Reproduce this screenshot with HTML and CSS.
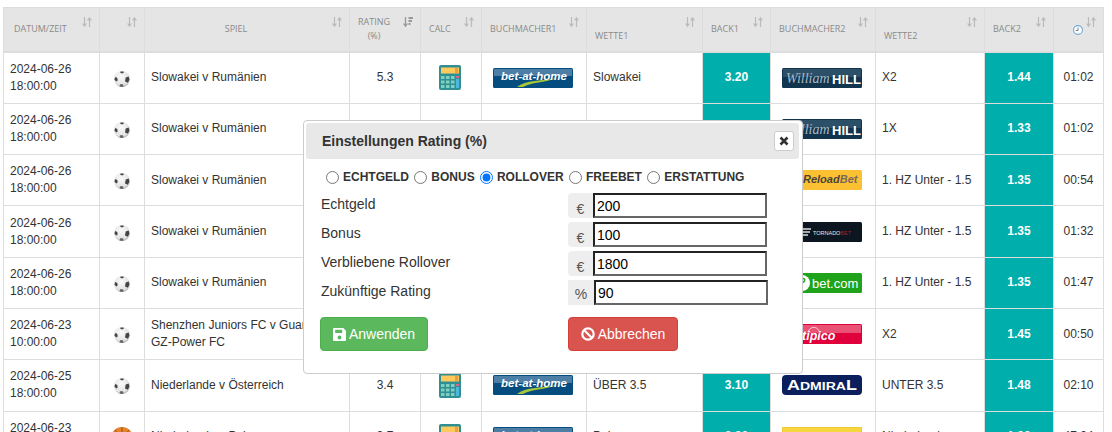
FILE: index.html
```html
<!DOCTYPE html>
<html lang="de">
<head>
    <meta charset="UTF-8">
    <title>Rating</title>
    <link rel="stylesheet" href="styles.css">
</head>
<body>
<svg class="defs" width="0" height="0">
    <defs>
        <radialGradient id="ball-shade" cx=".45" cy=".35" r=".75">
            <stop offset="0" stop-color="#fafafa"/>
            <stop offset=".7" stop-color="#e2e2e2"/>
            <stop offset="1" stop-color="#8c8c8c"/>
        </radialGradient>
    </defs>
    <symbol id="sort" viewBox="0 0 10 10">
        <path d="M2.500 0v8.500M.6 6.500l1.900 2.700 1.900-2.700M7.500 10V1.500M5.600 3.500l1.900-2.700 1.900 2.700" fill="none" stroke="currentColor" stroke-width="1.200"/>
    </symbol>
    <symbol id="sort-active" viewBox="0 0 10 10">
        <path d="M2.500 0v8.500M.6 6.500l1.900 2.700 1.900-2.700" fill="none" stroke="#999" stroke-width="1.300"/>
        <path d="M5.500 0h4.500v2H5.500zM5.500 3h3.500v2H5.500zM5.500 6h2v2H5.500z" fill="#999"/>
    </symbol>
    <symbol id="ball" viewBox="0 0 16 16">
        <circle cx="8" cy="8" r="8" fill="url(#ball-shade)"/>
        <path d="M6.500 .6l3 0 .4 1-1.900 1-1.900-1zM1.300 6l2 .9.4 2.600-1.500 1L.4 8.500zM14.700 5.500l-3 1.100-.7 3.900 2.900 1.200 1.600-3.200z" fill="#444"/>
        <path d="M6 13.200l3 .1.600 2.200-1.600.4-2.400-.4z" fill="#666"/>
    </symbol>
    <symbol id="calc" viewBox="0 0 22 25">
        <rect width="22" height="25" rx="2" fill="#2f8f93"/>
        <rect x="2" y="2.500" width="18" height="6" fill="#ffc95c"/>
        <rect x="16" y="3" width="3" height="5" fill="#ee9c3c"/>
        <g fill="#7fd0c2">
            <rect x="2" y="11" width="3.500" height="3"/><rect x="7" y="11" width="3.500" height="3"/><rect x="12" y="11" width="3.500" height="3"/>
            <rect x="2" y="15.500" width="3.500" height="3"/><rect x="7" y="15.500" width="3.500" height="3"/><rect x="12" y="15.500" width="3.500" height="3"/>
            <rect x="2" y="20" width="3.500" height="3"/><rect x="7" y="20" width="3.500" height="3"/><rect x="12" y="20" width="3.500" height="3"/>
        </g>
        <rect x="17" y="11" width="3" height="2" fill="#d8688c"/>
        <rect x="17" y="14" width="3" height="9" fill="#4fb6e0"/>
    </symbol>
    <symbol id="basket" viewBox="0 0 22 22">
        <circle cx="11" cy="11" r="11" fill="#e5822a"/>
        <path d="M0 11h22M11 0v22M4 3c4 4 4 12 0 16M18 3c-4 4-4 12 0 16" fill="none" stroke="#7a4413" stroke-width=".8"/>
    </symbol>
</svg>

<table class="odds">
    <colgroup>
        <col class="c-date"><col class="c-sport"><col class="c-game"><col class="c-rating"><col class="c-calc">
        <col class="c-book1"><col class="c-bet1"><col class="c-back1"><col class="c-book2"><col class="c-bet2">
        <col class="c-back2"><col class="c-time">
    </colgroup>
    <thead>
    <tr>
        <th class="left first">DATUM/ZEIT<svg class="sort"><use href="#sort"/></svg></th>
        <th><svg class="sort"><use href="#sort"/></svg></th>
        <th class="ctr">SPIEL<svg class="sort"><use href="#sort"/></svg></th>
        <th class="ctr">RATING<br>(%)<svg class="sort"><use href="#sort-active"/></svg></th>
        <th class="left">CALC<svg class="sort"><use href="#sort"/></svg></th>
        <th class="left">BUCHMACHER1<svg class="sort"><use href="#sort"/></svg></th>
        <th class="left low">WETTE1<svg class="sort"><use href="#sort"/></svg></th>
        <th class="left">BACK1<svg class="sort"><use href="#sort"/></svg></th>
        <th class="left">BUCHMACHER2<svg class="sort"><use href="#sort"/></svg></th>
        <th class="left low">WETTE2<svg class="sort"><use href="#sort"/></svg></th>
        <th class="left">BACK2<svg class="sort"><use href="#sort"/></svg></th>
        <th><svg class="clock" viewBox="0 0 10 10"><circle cx="5" cy="5" r="4.400" fill="#fff" stroke="#6fa8dc" stroke-width="1.100"/><path d="M5 2.500V5.500H2.800" fill="none" stroke="#667" stroke-width=".9"/></svg><svg class="sort"><use href="#sort"/></svg></th>
    </tr>
    </thead>
    <tbody>
    <tr>
        <td>2024-06-26<br>18:00:00</td>
        <td class="mid"><svg class="ball"><use href="#ball"/></svg></td>
        <td>Slowakei v Rumänien</td>
        <td class="mid">5.3</td>
        <td class="mid"><svg class="calc"><use href="#calc"/></svg></td>
        <td class="mid">
            <svg class="logo" viewBox="0 0 80 20">
                <rect width="80" height="20" rx="1.500" fill="#064d7f"/>
                <rect x="1" y="1" width="78" height="7" fill="#4d7fa6"/>
                <path d="M24 19c8-7 26-6 40-9-12 5-26 4-34 9z" fill="#a5c63b"/>
                <text x="41" y="11.500" class="t-bethome">bet-at-home</text>
            </svg>
        </td>
        <td>Slowakei</td>
        <td class="back">3.20</td>
        <td class="mid">
            <svg class="logo" viewBox="0 0 80 20">
                <rect width="80" height="20" rx="1.500" fill="#11344f"/>
                <rect x="1" y="1" width="78" height="8" fill="#2d5069"/>
                <text x="4" y="15" class="t-william">William</text>
                <text x="50" y="15.500" class="t-hill">HILL</text>
            </svg>
        </td>
        <td>X2</td>
        <td class="back">1.44</td>
        <td class="mid">01:02</td>
    </tr>
    <tr>
        <td>2024-06-26<br>18:00:00</td>
        <td class="mid"><svg class="ball"><use href="#ball"/></svg></td>
        <td>Slowakei v Rumänien</td>
        <td></td><td></td><td></td><td></td>
        <td class="back"></td>
        <td class="mid">
            <svg class="logo" viewBox="0 0 80 20">
                <rect width="80" height="20" rx="1.500" fill="#11344f"/>
                <rect x="1" y="1" width="78" height="8" fill="#2d5069"/>
                <text x="4" y="15" class="t-william">William</text>
                <text x="50" y="15.500" class="t-hill">HILL</text>
            </svg>
        </td>
        <td>1X</td>
        <td class="back">1.33</td>
        <td class="mid">01:02</td>
    </tr>
    <tr>
        <td>2024-06-26<br>18:00:00</td>
        <td class="mid"><svg class="ball"><use href="#ball"/></svg></td>
        <td>Slowakei v Rumänien</td>
        <td></td><td></td><td></td><td></td>
        <td class="back"></td>
        <td class="mid">
            <svg class="logo" viewBox="0 0 80 20">
                <rect width="80" height="20" rx="1.500" fill="#fcc133"/>
                <text x="21" y="12.500" class="t-reload">Reload<tspan fill="#77695a">Bet</tspan></text>
            </svg>
        </td>
        <td>1. HZ Unter - 1.5</td>
        <td class="back">1.35</td>
        <td class="mid">00:54</td>
    </tr>
    <tr>
        <td>2024-06-26<br>18:00:00</td>
        <td class="mid"><svg class="ball"><use href="#ball"/></svg></td>
        <td>Slowakei v Rumänien</td>
        <td></td><td></td><td></td><td></td>
        <td class="back"></td>
        <td class="mid">
            <svg class="logo" viewBox="0 0 80 20">
                <rect width="80" height="20" rx="1.500" fill="#0c1620"/>
                <path d="M15 7h14M16 10h12M20 13h6" stroke="#ddd" stroke-width="1.500"/>
                <text x="31" y="12.500" class="t-tornado">TORNADO<tspan fill="#b01820">BET</tspan></text>
            </svg>
        </td>
        <td>1. HZ Unter - 1.5</td>
        <td class="back">1.35</td>
        <td class="mid">01:32</td>
    </tr>
    <tr>
        <td>2024-06-26<br>18:00:00</td>
        <td class="mid"><svg class="ball"><use href="#ball"/></svg></td>
        <td>Slowakei v Rumänien</td>
        <td></td><td></td><td></td><td></td>
        <td class="back"></td>
        <td class="mid">
            <svg class="logo" viewBox="0 0 80 20">
                <rect width="80" height="20" rx="1.500" fill="#1fa31a"/>
                <circle cx="20" cy="10" r="8" fill="#fff"/>
                <path d="M21 5.500c2.500 0 2.500 3-1 4.500s-2 4.500 1 4.500" fill="none" stroke="#1fa31a" stroke-width="1.500"/>
                <text x="30" y="14.500" class="t-betcom">bet.com</text>
            </svg>
        </td>
        <td>1. HZ Unter - 1.5</td>
        <td class="back">1.35</td>
        <td class="mid">01:47</td>
    </tr>
    <tr>
        <td>2024-06-23<br>10:00:00</td>
        <td class="mid"><svg class="ball"><use href="#ball"/></svg></td>
        <td>Shenzhen Juniors FC v Guangzhou GZ-Power FC</td>
        <td></td><td></td><td></td><td></td>
        <td class="back"></td>
        <td class="mid">
            <svg class="logo" viewBox="0 0 80 20">
                <rect width="80" height="20" rx="1.500" fill="#e0003c"/>
                <rect x="1" y="1" width="78" height="8" fill="#e95275"/>
                <path d="M26 8c2-6 9-6 11-1" fill="none" stroke="#fff" stroke-width=".7"/>
                <text x="20" y="16" class="t-tipico">tipico</text>
            </svg>
        </td>
        <td>X2</td>
        <td class="back">1.45</td>
        <td class="mid">00:50</td>
    </tr>
    <tr>
        <td>2024-06-25<br>18:00:00</td>
        <td class="mid"><svg class="ball"><use href="#ball"/></svg></td>
        <td>Niederlande v Österreich</td>
        <td class="mid">3.4</td>
        <td class="mid"><svg class="calc"><use href="#calc"/></svg></td>
        <td class="mid">
            <svg class="logo" viewBox="0 0 80 20">
                <rect width="80" height="20" rx="1.500" fill="#064d7f"/>
                <rect x="1" y="1" width="78" height="7" fill="#4d7fa6"/>
                <path d="M24 19c8-7 26-6 40-9-12 5-26 4-34 9z" fill="#a5c63b"/>
                <text x="41" y="11.500" class="t-bethome">bet-at-home</text>
            </svg>
        </td>
        <td>ÜBER 3.5</td>
        <td class="back">3.10</td>
        <td class="mid">
            <svg class="logo" viewBox="0 0 80 20">
                <rect width="80" height="20" rx="4" fill="#0a1f5c"/>
                <text x="5" y="14.500" class="t-admiral" textLength="70" lengthAdjust="spacingAndGlyphs">A<tspan class="t-admiral-small">DMIRA</tspan>L</text>
            </svg>
        </td>
        <td>UNTER 3.5</td>
        <td class="back">1.48</td>
        <td class="mid">02:10</td>
    </tr>
    <tr>
        <td>2024-06-23<br>18:00:00</td>
        <td class="mid"><svg class="basket"><use href="#basket"/></svg></td>
        <td>Niederlande v Polen</td>
        <td class="mid">3.7</td>
        <td class="mid"><svg class="calc"><use href="#calc"/></svg></td>
        <td class="mid">
            <svg class="logo" viewBox="0 0 80 20">
                <rect width="80" height="20" rx="1.500" fill="#064d7f"/>
                <rect x="1" y="1" width="78" height="7" fill="#4d7fa6"/>
                <text x="41" y="11.500" class="t-bethome">bet-at-home</text>
            </svg>
        </td>
        <td>Polen</td>
        <td class="back">3.20</td>
        <td class="mid">
            <svg class="logo" viewBox="0 0 80 20">
                <rect width="80" height="20" rx="1.500" fill="#f7d63e" stroke="#e7bd2d"/>
            </svg>
        </td>
        <td>Niederlande</td>
        <td class="back">1.33</td>
        <td class="mid">47:04</td>
    </tr>
    </tbody>
</table>

<div class="modal">
    <div class="modal-head">
        <span class="modal-title">Einstellungen Rating (%)</span>
        <button class="close" type="button">
            <svg viewBox="0 0 10 10" width="10" height="10"><path d="M1.500 1.500l7 7M8.500 1.500l-7 7" stroke="#333" stroke-width="2.600"/></svg>
        </button>
    </div>
    <div class="modal-body">
        <div class="radios">
            <label class="radio"><input type="radio" name="mode">ECHTGELD</label>
            <label class="radio"><input type="radio" name="mode">BONUS</label>
            <label class="radio"><input type="radio" name="mode" checked>ROLLOVER</label>
            <label class="radio"><input type="radio" name="mode">FREEBET</label>
            <label class="radio"><input type="radio" name="mode">ERSTATTUNG</label>
        </div>
        <div class="fields">
            <span class="field-label">Echtgeld</span>
            <div class="group"><span class="addon">€</span><input class="field" value="200"></div>
            <span class="field-label">Bonus</span>
            <div class="group"><span class="addon">€</span><input class="field" value="100"></div>
            <span class="field-label">Verbliebene Rollover</span>
            <div class="group"><span class="addon">€</span><input class="field" value="1800"></div>
            <span class="field-label">Zukünftige Rating</span>
            <div class="group"><span class="addon addon-pct">%</span><input class="field" value="90"></div>
        </div>
        <div class="actions">
            <button class="btn btn-ok" type="button">
                <svg viewBox="0 0 12 12" width="13" height="13"><path fill-rule="evenodd" d="M1 0h8.500L12 2.500V11a1 1 0 0 1-1 1H1a1 1 0 0 1-1-1V1a1 1 0 0 1 1-1zM2 1.500v3h6.500v-3zM6 7a1.800 1.800 0 1 0 0 3.600A1.800 1.800 0 0 0 6 7z" fill="#fff"/></svg>Anwenden
            </button>
            <button class="btn btn-cancel" type="button">
                <svg viewBox="0 0 14 14" width="14" height="14"><circle cx="7" cy="7" r="5.700" fill="none" stroke="#fff" stroke-width="2.200"/><path d="M3 3l8 8" stroke="#fff" stroke-width="2.200"/></svg>Abbrechen
            </button>
        </div>
    </div>
</div>
</body>
</html>
```

FILE: styles.css
```css
html, body {
    margin: 0;
    height: 432px;
    overflow: hidden;
    background: #fff;
}
body {
    padding: 7px 0 0 3px;
    box-sizing: border-box;
    position: relative;
    font-family: "Liberation Sans", Arial, sans-serif;
    font-size: 12px;
    line-height: 17px;
    color: #333;
}
.defs {
    display: block;
    height: 0;
}

/* table */
.odds {
    border-collapse: collapse;
    table-layout: fixed;
    width: 1100px;
}
.c-date { width: 96px; }
.c-sport { width: 45px; }
.c-game { width: 205px; }
.c-rating { width: 71px; }
.c-calc { width: 61px; }
.c-book1 { width: 105px; }
.c-bet1 { width: 116px; }
.c-back1 { width: 68px; }
.c-book2 { width: 105px; }
.c-bet2 { width: 109px; }
.c-back2 { width: 69px; }
.c-time { width: 50px; }

.odds th {
    position: relative;
    box-sizing: border-box;
    height: 44px;
    padding: 0 8px;
    background: #e5e5e5;
    border: 1px solid #ddd;
    border-bottom: 2px solid #ddd;
    font-family: "Open Sans", sans-serif;
    font-size: 9px;
    font-weight: 400;
    line-height: 14px;
    color: #8a8a8a;
    text-align: center;
}
.odds th.ctr {
    padding-right: 30px;
}
.odds th.left {
    text-align: left;
}
.odds th.first {
    padding-left: 10px;
}
.odds th.low {
    vertical-align: bottom;
    padding-bottom: 8px;
}
.sort {
    position: absolute;
    top: 9px;
    right: 7px;
    width: 10px;
    height: 10px;
    color: #bbb;
}
.clock {
    width: 10px;
    height: 10px;
    margin-right: 2px;
    vertical-align: middle;
}
.odds td {
    height: 50.300px;
    padding: 0 6px;
    border: 1px solid #ddd;
    box-sizing: content-box;
    vertical-align: middle;
}
.odds td.mid {
    text-align: center;
}
.odds td.back {
    background: #00aeac;
    color: #fff;
    font-weight: 700;
    text-align: center;
}
.odds td svg {
    vertical-align: middle;
}
.ball {
    width: 16px;
    height: 16px;
    margin-top: 2px;
}
.basket {
    width: 22px;
    height: 22px;
    margin-top: 2px;
}
.calc {
    width: 22px;
    height: 25px;
    margin-right: 2px;
}
.logo {
    width: 80px;
    height: 20px;
    margin-left: -2px;
}

/* logos */
.t-bethome {
    font: italic 700 11.500px "Liberation Sans", sans-serif;
    fill: #fff;
    text-anchor: middle;
}
.t-william {
    font: italic 400 14px "Liberation Serif", serif;
    fill: #a9b8c4;
}
.t-hill {
    font: 700 13px "Liberation Sans", sans-serif;
    fill: #fff;
}
.t-reload {
    font: italic 700 11px "Liberation Sans", sans-serif;
    fill: #4a443a;
}
.t-tornado {
    font: 400 5.500px "Liberation Sans", sans-serif;
    fill: #e6e6e6;
}
.t-betcom {
    font: 400 13px "Liberation Sans", sans-serif;
    fill: #fff;
}
.t-tipico {
    font: italic 700 12.500px "Liberation Sans", sans-serif;
    fill: #fff;
}
.t-admiral {
    font: 700 14px "Liberation Sans", sans-serif;
    fill: #fff;
}
.t-admiral-small {
    font-size: 11px;
}

/* modal */
.modal {
    position: absolute;
    left: 303px;
    top: 120px;
    width: 500px;
    height: 254px;
    box-sizing: border-box;
    background: #fff;
    border: 1px solid #ccc;
    border-radius: 4px;
    padding: 2px 3px 0 2px;
}
.modal-head {
    display: flex;
    align-items: center;
    justify-content: space-between;
    height: 36px;
    padding: 0 5px 0 16px;
    background: #e8e8e8;
    border-radius: 3px;
}
.modal-title {
    font-size: 14px;
    font-weight: 700;
}
.close {
    display: flex;
    align-items: center;
    justify-content: center;
    width: 20px;
    height: 20px;
    padding: 0;
    background: #fff;
    border: 1px solid #ccc;
    border-radius: 3px;
}
.modal-body {
    padding: 9px 0 0 15px;
}
.radios {
    display: flex;
    gap: 5.300px;
    height: 18px;
    align-items: center;
    margin-left: 5px;
}
.radio {
    display: flex;
    align-items: center;
    gap: 4px;
    font-weight: 700;
}
.radio input {
    width: 13px;
    height: 13px;
    margin: 0;
}
.fields {
    display: grid;
    grid-template-columns: 247px 200px;
    grid-auto-rows: 25px;
    row-gap: 4px;
    margin-top: 7px;
    align-items: center;
    font-size: 14px;
}
.field-label {
    line-height: 20px;
    margin-top: -3px;
}
.group {
    display: flex;
    height: 25px;
}
.addon {
    width: 25px;
    padding-top: 6px;
    box-sizing: border-box;
    background: #eee;
    border-radius: 4px 0 0 4px;
    color: #555;
    line-height: 20px;
    text-align: center;
}
.addon-pct {
    width: 26px;
    padding-top: 4px;
    border-radius: 0;
}
.field {
    width: 174px;
    height: 25px;
    box-sizing: border-box;
    padding: 0 2px;
    border: 2px solid;
    border-color: #222 #666 #666 #222;
    font: 14px "Liberation Sans", sans-serif;
    color: #000;
}
.actions {
    display: grid;
    grid-template-columns: 248px 110px;
    margin: 12px 0 0 -1px;
}
.btn {
    display: flex;
    align-items: center;
    justify-content: center;
    gap: 3px;
    width: 108px;
    height: 34px;
    padding: 0;
    border: 1px solid;
    border-radius: 4px;
    font: 14px "Liberation Sans", sans-serif;
    color: #fff;
}
.btn-ok {
    background: #5cb85c;
    border-color: #4cae4c;
}
.btn-cancel {
    width: 110px;
    background: #d9534f;
    border-color: #d43f3a;
}
```
